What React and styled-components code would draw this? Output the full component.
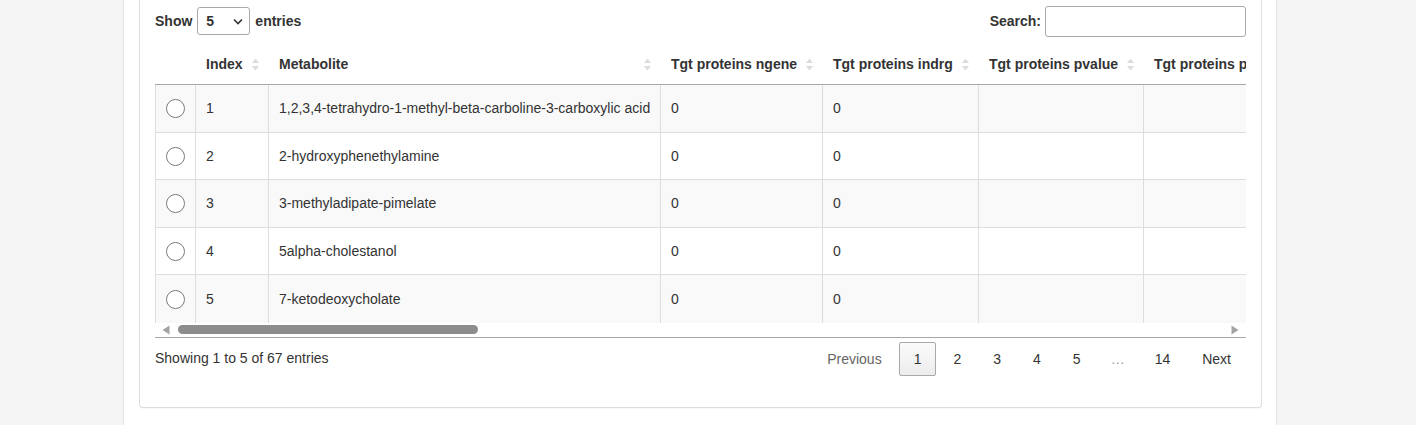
import React from "react";
import styled, { createGlobalStyle } from "styled-components";

const Global = createGlobalStyle`
  html, body { margin: 0; padding: 0; }
  body {
    background: #f5f5f5;
    font-family: "Liberation Sans", Arial, sans-serif;
    font-size: 14px;
    color: #333;
  }
`;

const Page = styled.div`
  margin-left: 123px;
  width: 1154px;
  min-height: 425px;
  background: #fff;
  border-left: 1px solid #e3e3e3;
  border-right: 1px solid #e3e3e3;
  box-sizing: border-box;
  padding: 0 14px 17px 15px;
  overflow: hidden;
`;

const Panel = styled.div`
  border: 1px solid #ddd;
  border-top: none;
  border-radius: 0 0 4px 4px;
  padding: 7px 15px 31px;
  box-shadow: 0 1px 1px rgba(0, 0, 0, 0.03);
`;

const Controls = styled.div`
  display: flex;
  justify-content: space-between;
  align-items: flex-start;
  height: 31px;
  margin-bottom: 8px;
`;

const ControlGroup = styled.label`
  display: flex;
  align-items: center;
  gap: ${(p) => p.$gap || 5}px;
  font-weight: bold;
  height: ${(p) => p.$h}px;
`;

const SelectWrap = styled.span`
  position: relative;
  display: inline-block;
  width: 53px;
  height: 28px;
`;

const Select = styled.select`
  appearance: none;
  width: 100%;
  height: 100%;
  border: 1px solid #aaa;
  border-radius: 3px;
  background: #fff;
  padding: 0 0 0 8px;
  font-family: inherit;
  font-size: 14px;
  font-weight: bold;
  color: #333;
`;

const Chevron = styled.svg`
  position: absolute;
  right: 7px;
  top: 11px;
  pointer-events: none;
`;

const SearchInput = styled.input`
  width: 201px;
  height: 31px;
  box-sizing: border-box;
  border: 1px solid #aaa;
  border-radius: 3px;
  padding: 0 6px;
  font-family: inherit;
  font-size: 14px;
`;

const ScrollBody = styled.div`
  overflow: hidden;
  width: 100%;
`;

const Table = styled.table`
  border-collapse: separate;
  border-spacing: 0;
  table-layout: fixed;
  width: ${(p) => p.$w}px;
`;

const Th = styled.th`
  text-align: left;
  font-weight: bold;
  padding: 10px 10px 12px;
  line-height: 16px;
  border-bottom: 1px solid #a8a8a8;
  white-space: nowrap;
  overflow: hidden;
`;

const ThInner = styled.div`
  display: flex;
  align-items: center;
  justify-content: space-between;
  gap: 6px;
`;

const Tr = styled.tr`
  height: 47.5px;
  background: ${(p) => (p.$odd ? "#f9f9f9" : "#fff")};
`;

const Td = styled.td`
  padding: 0 10px;
  line-height: 20px;
  white-space: nowrap;
  overflow: hidden;
  border-right: 1px solid #ddd;
  border-left: ${(p) => (p.$first ? "1px solid #ddd" : "none")};
  border-bottom: ${(p) => (p.$last ? "none" : "1px solid #ddd")};
  text-align: ${(p) => (p.$center ? "center" : "left")};
  vertical-align: middle;
`;

const Radio = styled.span`
  display: inline-block;
  width: 17px;
  height: 17px;
  border: 1px solid #7a7a7a;
  border-radius: 50%;
  background: #fff;
  vertical-align: middle;
  margin-top: -2px;
`;

const ScrollBar = styled.div`
  display: flex;
  align-items: center;
  height: 14px;
  border-bottom: 1px solid #a8a8a8;
  padding: 0 7px 0 7px;
`;

const ScrollTrack = styled.div`
  flex: 1;
  padding: 0 8px;
`;

const Thumb = styled.div`
  width: 300px;
  height: 9px;
  border-radius: 5px;
  background: #8c8c8c;
`;

const Footer = styled.div`
  display: flex;
  justify-content: space-between;
  align-items: flex-start;
`;

const Info = styled.div`
  padding-top: 10px;
  line-height: 20px;
`;

const Pagination = styled.div`
  display: flex;
  align-items: center;
  padding-top: 4px;
`;

const PageButton = styled.span`
  display: inline-block;
  padding: 8px 14px;
  line-height: 16px;
  margin-left: 2px;
  border: 1px solid ${(p) => (p.$current ? "#a9a9a9" : "transparent")};
  border-radius: 2px;
  background: ${(p) =>
    p.$current ? "linear-gradient(to bottom, #fbfbfb 0%, #ececec 100%)" : "transparent"};
  color: ${(p) => (p.$disabled ? "#666" : "#333")};
  text-align: center;
`;

const Ellipsis = styled.span`
  display: inline-block;
  padding: 8px 13px;
  line-height: 16px;
  margin-left: 2px;
  color: #999;
`;

function SortIcon() {
  return (
    <svg width="7" height="13" viewBox="0 0 7 13" style={{ flex: "none" }}>
      <path d="M3.5 0.5 L7 5 L0 5 Z" fill="#dcdcdc" />
      <path d="M0 8 L7 8 L3.5 12.5 Z" fill="#dcdcdc" />
    </svg>
  );
}

function ScrollArrow({ dir }) {
  return (
    <svg width="8" height="10" viewBox="0 0 8 10" style={{ flex: "none" }}>
      {dir === "left" ? (
        <path d="M7.5 0.5 L7.5 9.5 L0.5 5 Z" fill="#a3a3a3" />
      ) : (
        <path d="M0.5 0.5 L0.5 9.5 L7.5 5 Z" fill="#a3a3a3" />
      )}
    </svg>
  );
}

const columns = [
  { title: "", w: 41, sort: false },
  { title: "Index", w: 73, sort: true },
  { title: "Metabolite", w: 392, sort: true },
  { title: "Tgt proteins ngene", w: 162, sort: true },
  { title: "Tgt proteins indrg", w: 156, sort: true },
  { title: "Tgt proteins pvalue", w: 165, sort: true },
  { title: "Tgt proteins padj", w: 165, sort: true },
  { title: "Tgt proteins or", w: 150, sort: true },
  { title: "Tgt proteins genes", w: 170, sort: true },
];

const rows = [
  ["1", "1,2,3,4-tetrahydro-1-methyl-beta-carboline-3-carboxylic acid"],
  ["2", "2-hydroxyphenethylamine"],
  ["3", "3-methyladipate-pimelate"],
  ["4", "5alpha-cholestanol"],
  ["5", "7-ketodeoxycholate"],
];

export default function App() {
  const totalW = columns.reduce((s, c) => s + c.w, 0);
  return (
    <>
      <Global />
      <Page>
        <Panel>
          <Controls>
            <ControlGroup $h={28}>
              Show
              <SelectWrap>
                <Select defaultValue="5">
                  <option value="5">5</option>
                  <option value="10">10</option>
                  <option value="25">25</option>
                </Select>
                <Chevron width="10" height="7" viewBox="0 0 10 7">
                  <path d="M1 1.5 L5 5.5 L9 1.5" fill="none" stroke="#333" strokeWidth="1.6" />
                </Chevron>
              </SelectWrap>
              entries
            </ControlGroup>
            <ControlGroup $h={28} $gap={4}>
              Search:
              <SearchInput type="search" />
            </ControlGroup>
          </Controls>
          <ScrollBody>
            <Table $w={totalW}>
              <colgroup>
                {columns.map((c, i) => (
                  <col key={i} style={{ width: c.w }} />
                ))}
              </colgroup>
              <thead>
                <tr>
                  {columns.map((c, i) => (
                    <Th key={i}>
                      <ThInner>
                        <span>{c.title}</span>
                        {c.sort && <SortIcon />}
                      </ThInner>
                    </Th>
                  ))}
                </tr>
              </thead>
              <tbody>
                {rows.map((r, ri) => {
                  const last = ri === rows.length - 1;
                  return (
                    <Tr key={ri} $odd={ri % 2 === 0}>
                      <Td $first $center $last={last}>
                        <Radio />
                      </Td>
                      <Td $last={last}>{r[0]}</Td>
                      <Td $last={last}>{r[1]}</Td>
                      <Td $last={last}>0</Td>
                      <Td $last={last}>0</Td>
                      <Td $last={last}></Td>
                      <Td $last={last}></Td>
                      <Td $last={last}></Td>
                      <Td $last={last}></Td>
                    </Tr>
                  );
                })}
              </tbody>
            </Table>
          </ScrollBody>
          <ScrollBar>
            <ScrollArrow dir="left" />
            <ScrollTrack>
              <Thumb />
            </ScrollTrack>
            <ScrollArrow dir="right" />
          </ScrollBar>
          <Footer>
            <Info>Showing 1 to 5 of 67 entries</Info>
            <Pagination>
              <PageButton $disabled>Previous</PageButton>
              <PageButton $current>1</PageButton>
              <PageButton>2</PageButton>
              <PageButton>3</PageButton>
              <PageButton>4</PageButton>
              <PageButton>5</PageButton>
              <Ellipsis>…</Ellipsis>
              <PageButton>14</PageButton>
              <PageButton>Next</PageButton>
            </Pagination>
          </Footer>
        </Panel>
      </Page>
    </>
  );
}
